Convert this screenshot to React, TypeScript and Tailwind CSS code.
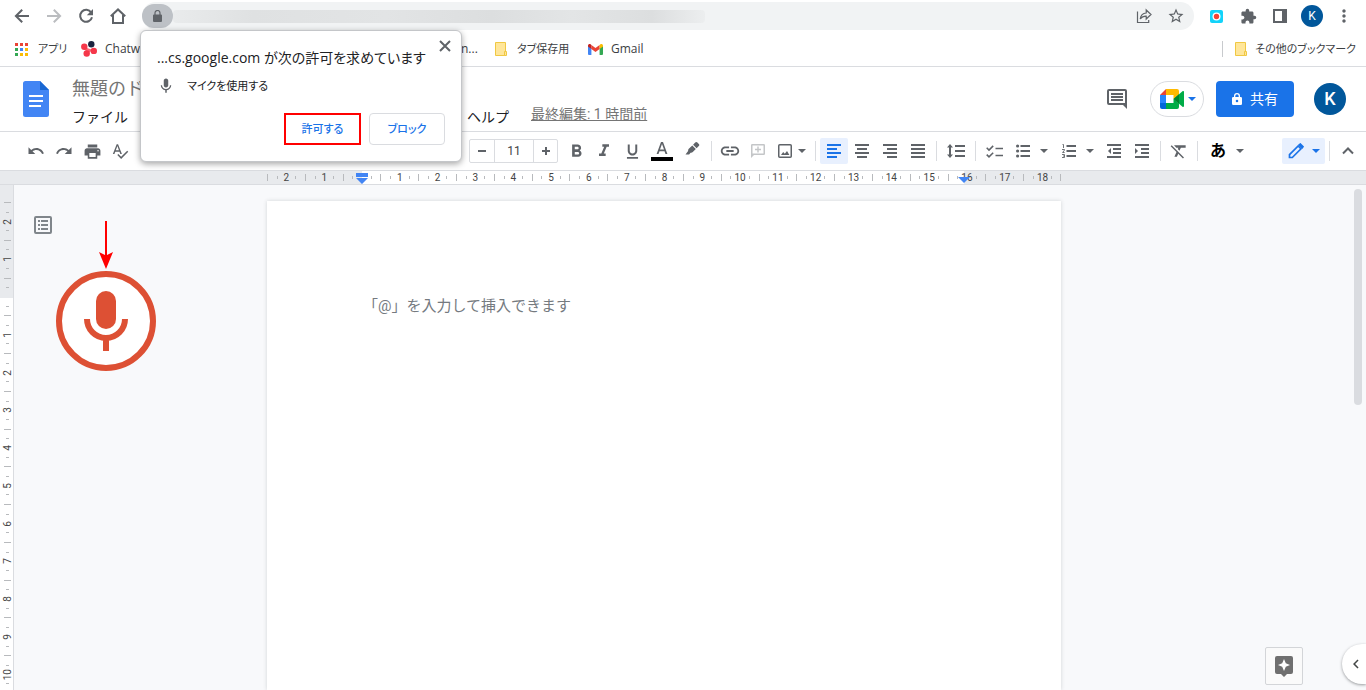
import type { ReactNode } from "react";
import {
  MdStarBorder,
  MdExtension,
  MdMoreVert,
  MdUndo,
  MdRedo,
  MdPrint,
  MdSpellcheck,
  MdFormatBold,
  MdFormatItalic,
  MdFormatUnderlined,
  MdInsertLink,
  MdFormatClear,
  MdKeyboardArrowLeft,
  MdMic,
} from "react-icons/md";

const Caret = () => (
  <svg viewBox="0 0 8 4" className="h-1 w-2 shrink-0" fill="currentColor">
    <path d="M0 0h8L4 4z" />
  </svg>
);

const Sep = () => <div className="mx-1 h-5 w-px shrink-0 bg-[#dadce0]" />;

function Tool({ label, children, className = "w-7" }: { label: string; children: ReactNode; className?: string }) {
  return (
    <button type="button" aria-label={label} className={`flex h-[26px] shrink-0 items-center justify-center ${className}`}>
      {children}
    </button>
  );
}

function StrokeIcon({ d }: { d: string }) {
  return (
    <svg viewBox="0 0 16 16" className="h-4 w-4 shrink-0" fill="none" stroke="currentColor" strokeWidth="2">
      <path d={d} />
    </svg>
  );
}

function AlignIcon({ rows }: { rows: [number, number][] }) {
  return (
    <svg viewBox="0 0 14 14" className="h-[14px] w-[14px]" fill="currentColor">
      {rows.map(([x, w], i) => (
        <rect key={i} x={x} y={i * 4} width={w} height="2" />
      ))}
    </svg>
  );
}

const LineSpacingIcon = () => (
  <svg viewBox="0 0 18 14" className="h-[14px] w-[18px]" fill="currentColor">
    <path d="M8 1h10v2H8zM8 6h10v2H8zM8 11h10v2H8z" />
    <path d="M3 0l3 3.500H4v7h2L3 14l-3-3.500h2v-7H0z" />
  </svg>
);

const ChecklistIcon = () => (
  <svg viewBox="0 0 17 13" className="h-[13px] w-[17px]" fill="none" stroke="currentColor">
    <path d="M9.500 3.500H17M9.500 10.500H17" strokeWidth="1.600" />
    <path d="M.7 2.800 3 5.100 7.200.9M.7 9.600 3 11.900l4.200-4.200" strokeWidth="1.500" />
  </svg>
);

const BulletsIcon = () => (
  <svg viewBox="0 0 14 14" className="mx-[2px] h-[14px] w-[14px] shrink-0" fill="currentColor">
    <path d="M4.500 1H14v2H4.500zM4.500 6H14v2H4.500zM4.500 11H14v2H4.500z" />
    <circle cx="1.600" cy="2" r="1.600" />
    <circle cx="1.600" cy="7" r="1.600" />
    <circle cx="1.600" cy="12" r="1.600" />
  </svg>
);

const NumbersIcon = () => (
  <svg viewBox="0 0 14 14" className="mx-[2px] h-[14px] w-[14px] shrink-0" fill="currentColor">
    <path d="M4.500 1H14v2H4.500zM4.500 6H14v2H4.500zM4.500 11H14v2H4.500z" />
    <path d="M.5.5h1V4M0 5.500h2.500v.6L.6 8.500h2M0 10.500h2.500v3H0M1 12h1.500" fill="none" stroke="currentColor" strokeWidth=".9" />
  </svg>
);

function IndentIcon({ arrow }: { arrow: string }) {
  return (
    <svg viewBox="0 0 14 14" className="h-[14px] w-[14px]" fill="currentColor">
      <path d="M0 0h14v2H0zM6 4h8v2H6zM6 8h8v2H6zM0 12h14v2H0z" />
      <path d={arrow} />
    </svg>
  );
}

const ReloadIcon = () => (
  <svg viewBox="0 0 16 16" className="h-4 w-4" fill="none" stroke="currentColor" strokeWidth="2">
    <path d="M13.200 4.500A6 6 0 1 0 14 9.200" />
    <path d="M15 1v6.200H8.800z" fill="currentColor" stroke="none" />
  </svg>
);

const AddCommentIcon = () => (
  <svg viewBox="0 0 14 14" className="h-[14px] w-[14px]" fill="currentColor">
    <path fillRule="evenodd" d="M1.200 0h11.600A1.200 1.200 0 0 1 14 1.200v8.600a1.200 1.200 0 0 1-1.200 1.200H3l-3 3V1.200A1.200 1.200 0 0 1 1.200 0zm.3 1.500v8h11v-8z" />
    <path d="M6.300 2.500h1.400v2.300H10v1.400H7.700v2.300H6.300V6.200H4V4.800h2.300z" />
  </svg>
);

const SiteLockIcon = () => (
  <svg viewBox="0 0 9 12" className="h-3 w-[9px]" fill="currentColor">
    <path d="M1 4.500h7a1 1 0 0 1 1 1V11a1 1 0 0 1-1 1H1a1 1 0 0 1-1-1V5.500a1 1 0 0 1 1-1z" />
    <path d="M2 5V3a2.500 2.500 0 0 1 5 0v2" fill="none" stroke="currentColor" strokeWidth="1.200" />
  </svg>
);

const ShareIcon = () => (
  <svg viewBox="0 0 16 16" className="h-4 w-4" fill="none" stroke="currentColor" strokeWidth="1.2">
    <path d="M1.500 3.500v11h11.2V12" />
    <path d="M4.200 11c.6-4 2.600-5.800 6-6V2l4.800 4.500-4.800 4.500V8.200C7.500 8.100 5.700 9 4.200 11z" />
  </svg>
);

const FolderIcon = () => (
  <svg viewBox="0 0 12 14" className="h-[14px] w-3" fill="#ffe69a" stroke="#f0c843">
    <path d="M.5.5h10v13H.5z" />
    <path d="M9.500 9.500h2v4h-2z" />
  </svg>
);

const AppsIcon = () => {
  const colors = ["#ea4335", "#ea4335", "#ea4335", "#34a853", "#4285f4", "#fbbc04", "#34a853", "#fbbc04", "#fbbc04"];
  return (
    <svg viewBox="0 0 13 13" className="h-[13px] w-[13px]">
      {colors.map((c, i) => (
        <rect key={i} x={(i % 3) * 5} y={Math.floor(i / 3) * 5} width="3" height="3" fill={c} />
      ))}
    </svg>
  );
};

const ChatworkIcon = () => (
  <svg viewBox="0 0 16 16" className="h-4 w-4">
    <g fill="#f5374a">
      <circle cx="3.300" cy="5.700" r="3.200" />
      <circle cx="12.800" cy="9.900" r="3.200" />
      <circle cx="5.700" cy="12.500" r="3.200" />
      <path d="m3 6 9 3-6 4z" opacity=".75" />
    </g>
    <circle cx="10.300" cy="3.300" r="3.200" fill="#1a2540" />
  </svg>
);

const GmailIcon = () => (
  <svg viewBox="0 0 15 11" className="h-[11px] w-[15px]">
    <path d="M0 1.500 3.400 4v7H1a1 1 0 0 1-1-1z" fill="#4285f4" />
    <path d="M15 1.500 11.600 4v7H14a1 1 0 0 0 1-1z" fill="#34a853" />
    <path d="M3.400 1 7.500 4.100 11.600 1v4L7.500 8 3.400 5z" fill="#ea4335" />
    <path d="M0 1.700C0 .2 1.700-.5 2.800.5l.6.5v4L0 2.600z" fill="#c5221f" />
    <path d="M15 1.700c0-1.500-1.700-2.200-2.800-1.200l-.6.5v4L15 2.600z" fill="#fbbc04" />
  </svg>
);

const DocsLogo = () => (
  <svg viewBox="0 0 26 36" className="h-9 w-[26px]">
    <path d="M2.500 0H17l9 9v24.500a2.500 2.500 0 0 1-2.500 2.500h-21A2.500 2.500 0 0 1 0 33.500v-31A2.500 2.500 0 0 1 2.500 0z" fill="#4285f4" />
    <path d="M17 0l9 9h-9z" fill="#1967d2" />
    <path d="M6 14h14v2H6zM6 19h14v2H6zM6 24h12v2H6z" fill="#fff" />
  </svg>
);

const MeetIcon = () => (
  <svg viewBox="0 0 24 20" className="h-5 w-6">
    <path d="M0 6h6v8H0z" fill="#2684fc" />
    <path d="M0 6 6 0v6z" fill="#ea4335" />
    <path d="M0 14h6v6H2a2 2 0 0 1-2-2z" fill="#0066da" />
    <path d="M6 0h11a2 2 0 0 1 2 2v4.500L13.500 10V6H6z" fill="#ffba00" />
    <path d="M6 14h7.500v-4l5.500 4.500V18a2 2 0 0 1-2 2H6z" fill="#00ac47" />
    <path d="M13.500 10 22.500 2.300c.6-.5 1.500-.1 1.500.7v14c0 .8-.9 1.200-1.500.7z" fill="#00ac47" />
    <path d="M13.500 10 19 5.300v9.400z" fill="#00832d" />
  </svg>
);

const CommentIcon = () => (
  <svg viewBox="0 0 20 20" className="h-5 w-5" fill="currentColor">
    <path fillRule="evenodd" d="M2 0h16a2 2 0 0 1 2 2v18l-4-4H2a2 2 0 0 1-2-2V2a2 2 0 0 1 2-2zm0 2v12h16V2z" />
    <path d="M4 4h12v2H4zM4 7h12v2H4zM4 10h12v2H4z" />
  </svg>
);

const ImageIcon = () => (
  <svg viewBox="0 0 14 14" className="h-[14px] w-[14px]" fill="none" stroke="currentColor">
    <rect x=".75" y=".75" width="12.500" height="12.500" rx="1" strokeWidth="1.500" />
    <path d="M3 11l2.200-3 1.600 1.800L9 7l2.400 4z" fill="currentColor" stroke="none" />
  </svg>
);

const HighlighterIcon = () => (
  <svg viewBox="0 0 15 14" className="h-[14px] w-[15px]" fill="currentColor">
    <path d="M10.200.6a1.600 1.600 0 0 1 2.200 0l1.400 1.300a1.600 1.600 0 0 1 0 2.200L11.600 6.300 8.100 2.800z" />
    <path d="M7.300 3.600l3.500 3.500-3 3c-.6.6-1.400.9-2.200.7L4.100 12.500H.5l2.600-3.600c-.1-.8.1-1.600.7-2.200z" />
  </svg>
);

const OutlineIcon = () => (
  <svg viewBox="0 0 18 18" className="h-[18px] w-[18px]" fill="#80868b">
    <path fillRule="evenodd" d="M2 0h14a2 2 0 0 1 2 2v14a2 2 0 0 1-2 2H2a2 2 0 0 1-2-2V2a2 2 0 0 1 2-2zm0 2v14h14V2z" />
    <path d="M4 4h2v2H4zM7 4h7v2H7zM4 8h2v2H4zM7 8h7v2H7zM4 12h2v2H4zM7 12h7v2H7z" />
  </svg>
);

const PencilIcon = () => (
  <svg viewBox="0 0 16 16" className="h-4 w-4" fill="none" stroke="currentColor" strokeWidth="1.700">
    <path d="M1.500 14.500v-2.800l8.700-8.700 2.800 2.800-8.700 8.700z" />
    <path d="M11.300 1.800l1-.8 2.700 2.700-.8 1z" fill="currentColor" />
  </svg>
);

const AssistIcon = () => (
  <svg viewBox="0 0 18 21" className="h-[21px] w-[18px]">
    <path d="M2 0h14a2 2 0 0 1 2 2v14a2 2 0 0 1-2 2h-4l-3 3-3-3H2a2 2 0 0 1-2-2V2a2 2 0 0 1 2-2z" fill="#6f6f6f" />
    <path d="M9 3l1.800 4.200L15 9l-4.200 1.800L9 15l-1.800-4.200L3 9l4.200-1.800z" fill="#fff" />
  </svg>
);

const VoiceMic = () => (
  <svg viewBox="0 0 44 60" className="h-[60px] w-11">
    <rect x="12" y="0" width="20" height="38" rx="10" fill="#dd5034" />
    <path d="M3 28a19 19 0 0 0 38 0M22 47v13" fill="none" stroke="#dd5034" strokeWidth="6" />
  </svg>
);

const horizontal = [2, 1, 0, ...Array.from({ length: 18 }, (_, i) => i + 1)];
const vertical = [2, 1, 0, ...Array.from({ length: 10 }, (_, i) => i + 1)];

function HorizontalRuler() {
  return (
    <div className="flex h-[15px] shrink-0 border-y border-[#dadce0] bg-[#e8eaed] text-[10px] leading-[13px] text-[#444]">
      <div className="w-[267px] shrink-0" />
      <div className="relative grid w-[794px] shrink-0 grid-cols-[repeat(21,minmax(0,1fr))] bg-[linear-gradient(to_right,#e8eaed_95px,#fff_95px,#fff_697px,#e8eaed_697px)]">
        {horizontal.map((n, i) => (
          <div key={i} className="flex items-center justify-between">
            <span className="h-[7px] w-px bg-[#b8babd]" />
            <span className="h-[3px] w-px bg-[#b8babd]" />
            <span className="flex w-0 justify-center">{n || ""}</span>
            <span className="h-[3px] w-px bg-[#b8babd]" />
            <span className="w-0" />
          </div>
        ))}
        <span className="absolute top-[3px] right-0 h-[7px] w-px bg-[#b8babd]" />
        <svg viewBox="0 0 12 12" className="absolute top-[2px] left-[89px] h-3 w-3" fill="#4285f4">
          <path d="M0 0h12v4H0zM0 5h12l-6 6z" />
        </svg>
        <svg viewBox="0 0 12 6" className="absolute top-[6px] left-[691px] h-[6px] w-3" fill="#4285f4">
          <path d="M0 0h12L6 6z" />
        </svg>
      </div>
    </div>
  );
}

function VerticalRuler() {
  return (
    <div className="w-[14px] shrink-0 border-r border-[#dadce0] bg-[linear-gradient(to_bottom,#e8eaed_113px,#fff_113px)] pt-[17px] text-[10px] leading-[15px] text-[#444]">
      <div className="grid h-[491px] grid-rows-[repeat(13,minmax(0,1fr))]">
        {vertical.map((n, i) => (
          <div key={i} className="flex flex-col items-center justify-between">
            <span className="h-px w-[7px] bg-[#b8babd]" />
            <span className="h-px w-[3px] bg-[#b8babd]" />
            <span className="flex h-0 items-center">
              <span className="rotate-180 [writing-mode:vertical-rl]">{n || ""}</span>
            </span>
            <span className="h-px w-[3px] bg-[#b8babd]" />
            <span className="h-0" />
          </div>
        ))}
      </div>
    </div>
  );
}

function BrowserBar() {
  const slot = "flex h-7 w-8 shrink-0 items-center justify-center";
  return (
    <div className="flex h-8 shrink-0 items-center px-[6px] text-[#5f6368]">
      <button type="button" aria-label="戻る" className={slot}><StrokeIcon d="M15 8H2.500M8.200 1.700 1.900 8l6.300 6.300" /></button>
      <button type="button" aria-label="進む" className={`${slot} text-[#bbbdc0]`}><StrokeIcon d="M1 8h12.500M7.800 1.700 14.100 8l-6.300 6.300" /></button>
      <button type="button" aria-label="再読み込み" className={slot}><ReloadIcon /></button>
      <button type="button" aria-label="ホーム" className={slot}><StrokeIcon d="M.8 8.200 8 1.400l7.200 6.800M3 7v8h10V7" /></button>
      <div className="ml-2 flex h-7 flex-1 items-center rounded-full bg-[#f1f3f4] pr-[2px]">
        <button type="button" aria-label="サイト情報" className="flex h-6 w-[31px] shrink-0 items-center justify-center rounded-full bg-[#bdc1c6]">
          <SiteLockIcon />
        </button>
        <div className="h-[13px] w-[532px] rounded-sm bg-[linear-gradient(to_right,#e9ebec,#dfe1e2_15%,#e2e4e5_40%,#dcdedf_60%,#e3e5e6_75%,#dcdedf_90%,#eceeef)]" />
        <div className="flex-1" />
        <button type="button" aria-label="共有" className={slot}><ShareIcon /></button>
        <button type="button" aria-label="ブックマークに追加" className={slot}><MdStarBorder size={18} /></button>
      </div>
      <div className="ml-[6px] flex">
        <button type="button" aria-label="画面録画" className={slot}>
          <svg viewBox="0 0 13 13" className="h-[13px] w-[13px]">
            <rect width="13" height="13" rx="2" fill="#12d3fa" />
            <circle cx="6.500" cy="6.500" r="4" fill="#fff" />
            <circle cx="6.500" cy="6.500" r="2.700" fill="#f44336" />
          </svg>
        </button>
        <button type="button" aria-label="拡張機能" className={slot}><MdExtension size={17} /></button>
        <button type="button" aria-label="サイドパネル" className={slot}>
          <svg viewBox="0 0 14 14" className="h-[14px] w-[14px]" fill="currentColor">
            <path fillRule="evenodd" d="M0 0h14v14H0zM2 2v10h7V2z" />
          </svg>
        </button>
        <button type="button" aria-label="アカウント" className={slot}>
          <span className="flex size-[22px] items-center justify-center rounded-full bg-[#01579b] text-xs text-white">K</span>
        </button>
        <button type="button" aria-label="メニュー" className={slot}><MdMoreVert size={20} /></button>
      </div>
    </div>
  );
}

function Bookmarks() {
  const link = "flex items-center whitespace-nowrap";
  return (
    <nav className="flex h-[35px] shrink-0 items-center border-b border-[#dadce0] pr-[10px] pl-[15px] font-['Open_Sans','Noto_Sans_CJK_JP',sans-serif] text-xs text-[#3c4043] [font-feature-settings:'palt']">
      <a href="#apps" className={`${link} w-[66px] gap-[10px] text-[11px]`}><AppsIcon />アプリ</a>
      <a href="#chatwork" className={`${link} w-[380px] gap-2`}><ChatworkIcon />Chatwork</a>
      <a href="#more" className={`${link} w-[34px]`}>n...</a>
      <a href="#tabs" className={`${link} w-[93px] gap-[10px] text-[11px]`}><FolderIcon />タブ保存用</a>
      <a href="#gmail" className={`${link} gap-2`}><GmailIcon />Gmail</a>
      <div className="flex-1" />
      <div className="mr-3 h-4 w-px bg-[#c8cacd]" />
      <a href="#others" className={`${link} gap-2 text-[11px]`}><FolderIcon />その他のブックマーク</a>
    </nav>
  );
}

function Header() {
  return (
    <header className="flex h-[65px] shrink-0 items-center border-b border-[#dadce0] pr-5 pl-[23px]">
      <a href="#home" aria-label="ドキュメント ホーム"><DocsLogo /></a>
      <div className="ml-[23px] flex flex-col pt-[7px] whitespace-nowrap">
        <h1 className="text-lg leading-7 text-[#757575]">無題のド</h1>
        <div className="flex items-start text-sm leading-7 text-[#202124]">
          <button type="button" className="w-[395px] text-left">ファイル</button>
          <button type="button">ヘルプ</button>
          <a href="#history" className="ml-[22px] leading-[22px] text-[#757575] underline">最終編集: 1 時間前</a>
        </div>
      </div>
      <div className="flex-1" />
      <button type="button" aria-label="コメント履歴" className="mr-[23px] text-[#5f6368]"><CommentIcon /></button>
      <button type="button" aria-label="ビデオ通話" className="mr-3 flex h-9 w-[54px] items-center justify-center gap-1 rounded-full border border-[#dadce0] pl-[2px] text-[#1a73e8]">
        <MeetIcon />
        <Caret />
      </button>
      <button type="button" className="mr-5 flex h-9 w-[78px] items-center justify-center gap-2 rounded bg-[#1a73e8] text-sm text-white">
        <svg viewBox="0 0 10 12" className="h-3 w-[10px]" fill="currentColor">
          <path fillRule="evenodd" d="M1.200 4H2V3a3 3 0 0 1 6 0v1h.8A1.200 1.200 0 0 1 10 5.200v5.600A1.200 1.200 0 0 1 8.800 12H1.200A1.200 1.200 0 0 1 0 10.800V5.200A1.200 1.200 0 0 1 1.200 4zm2.100 0h3.400V3a1.700 1.700 0 0 0-3.400 0zM5 6.700a1.300 1.300 0 1 0 0 2.600 1.300 1.300 0 0 0 0-2.600z" />
        </svg>
        共有
      </button>
      <button type="button" aria-label="Google アカウント" className="flex size-8 items-center justify-center rounded-full bg-[#01579b] text-lg font-medium text-white">K</button>
    </header>
  );
}

function Toolbar() {
  return (
    <div className="flex h-[38px] shrink-0 items-center pr-1 pl-[22px] text-[#5f6368]">
      <Tool label="元に戻す"><MdUndo size={18} /></Tool>
      <Tool label="やり直し"><MdRedo size={18} /></Tool>
      <Tool label="印刷"><MdPrint size={19} /></Tool>
      <Tool label="スペルチェック"><MdSpellcheck size={18} /></Tool>
      <div className="w-[335px] shrink-0" />
      <div className="flex h-6 w-[89px] shrink-0 items-stretch rounded-xs border border-[#dadce0]">
        <Tool label="縮小" className="h-full w-6"><StrokeIcon d="M4 8h8" /></Tool>
        <input aria-label="フォントサイズ" defaultValue="11" className="w-10 min-w-0 border-x border-[#dadce0] text-center text-xs text-[#444]" />
        <Tool label="拡大" className="h-full w-[23px]"><StrokeIcon d="M4 8h8M8 4v8" /></Tool>
      </div>
      <Tool label="太字" className="ml-1 w-7"><MdFormatBold size={21} /></Tool>
      <Tool label="斜体"><MdFormatItalic size={20} /></Tool>
      <Tool label="下線"><MdFormatUnderlined size={19} /></Tool>
      <Tool label="文字の色" className="w-8 flex-col">
        <svg viewBox="0 0 12 13" className="h-[13px] w-3" fill="currentColor">
          <path fillRule="evenodd" d="M5 0h2l4.400 12H9.500l-1-2.800h-5l-1 2.800H.6zM4 7.600h4L6 2.100z" />
        </svg>
        <span className="mt-[2px] h-1 w-[22px] bg-black" />
      </Tool>
      <Tool label="ハイライト" className="w-[29px] pb-1"><HighlighterIcon /></Tool>
      <Sep />
      <Tool label="リンクを挿入"><MdInsertLink size={22} /></Tool>
      <Tool label="コメントを追加" className="w-7 text-[#c4c6c8]"><AddCommentIcon /></Tool>
      <Tool label="画像を挿入" className="w-[39px] gap-[6px] text-[#5f6368]"><ImageIcon /><Caret /></Tool>
      <Sep />
      <Tool label="左揃え" className="w-7 rounded-xs bg-[#e8f0fe] text-[#1a73e8]"><AlignIcon rows={[[0, 14], [0, 10], [0, 14], [0, 10]]} /></Tool>
      <Tool label="中央揃え"><AlignIcon rows={[[0, 14], [2, 10], [0, 14], [2, 10]]} /></Tool>
      <Tool label="右揃え"><AlignIcon rows={[[0, 14], [4, 10], [0, 14], [4, 10]]} /></Tool>
      <Tool label="両端揃え"><AlignIcon rows={[[0, 14], [0, 14], [0, 14], [0, 14]]} /></Tool>
      <Sep />
      <Tool label="行間隔" className="w-[30px]"><LineSpacingIcon /></Tool>
      <Sep />
      <Tool label="チェックリスト"><ChecklistIcon /></Tool>
      <Tool label="箇条書き" className="w-[46px] gap-2"><BulletsIcon /><Caret /></Tool>
      <Tool label="番号付きリスト" className="w-[46px] gap-2"><NumbersIcon /><Caret /></Tool>
      <Tool label="インデント減"><IndentIcon arrow="M4 4v6L1 7z" /></Tool>
      <Tool label="インデント増"><IndentIcon arrow="M0 4v6l3-3z" /></Tool>
      <Sep />
      <Tool label="書式をクリア"><MdFormatClear size={20} /></Tool>
      <Sep />
      <Tool label="入力ツール" className="w-[50px] gap-[10px]">
        <span className="text-base leading-6 font-bold text-black">あ</span>
        <Caret />
      </Tool>
      <div className="flex-1" />
      <Tool label="編集モード" className="w-[43px] gap-2 rounded-xs bg-[#e8f0fe] text-[#1a73e8]"><PencilIcon /><Caret /></Tool>
      <Sep />
      <Tool label="メニューを非表示"><StrokeIcon d="M3 10.500 8 5.500l5 5" /></Tool>
    </div>
  );
}

function PermissionDialog() {
  return (
    <section
      role="dialog"
      aria-labelledby="permission-title"
      className="absolute top-[30px] left-[140px] w-[322px] rounded-md border border-[#c4c6c9] bg-white p-4 pt-[7px] font-['Open_Sans','Noto_Sans_CJK_JP',sans-serif] text-[#202124] shadow-[0_2px_6px_rgba(0,0,0,0.35)] [font-feature-settings:'palt']"
    >
      <div className="-mr-2 flex justify-end text-[#5f6368]">
        <button type="button" aria-label="閉じる"><StrokeIcon d="M3 3l10 10M13 3 3 13" /></button>
      </div>
      <h2 id="permission-title" className="-mt-2 text-sm leading-6 whitespace-nowrap">...cs.google.com が次の許可を求めています</h2>
      <p className="mt-1 flex items-center gap-3 text-[11px] leading-6">
        <MdMic size={18} className="text-[#5f6368]" />
        マイクを使用する
      </p>
      <div className="mt-[15px] flex justify-end gap-2 text-[11px] font-medium text-[#1a73e8]">
        <button type="button" className="h-8 w-[77px] border-2 border-[#f00]">許可する</button>
        <button type="button" className="h-8 w-[76px] rounded border border-[#dadce0]">ブロック</button>
      </div>
    </section>
  );
}

export default function App() {
  return (
    <div className="relative flex h-screen flex-col overflow-hidden bg-white font-[Roboto,'Noto_Sans_CJK_JP',sans-serif]">
      <BrowserBar />
      <Bookmarks />
      <Header />
      <Toolbar />
      <HorizontalRuler />
      <main className="relative flex min-h-0 flex-1 overflow-hidden bg-[#f8f9fb]">
        <VerticalRuler />
        <aside className="w-[253px] shrink-0 pt-[31px] pl-5">
          <button type="button" aria-label="ドキュメントの概要を表示" className="block"><OutlineIcon /></button>
          <div className="ml-[22px] flex w-[100px] flex-col items-center">
            <svg viewBox="0 0 14 50" className="-mt-[13px] h-[50px] w-[14px]" fill="#f00">
              <path d="M6 0h2v34l6-3-7 17L0 31l6 3z" />
            </svg>
            <button type="button" aria-label="音声入力" className="flex size-[100px] items-center justify-center rounded-full border-6 border-[#dd5034] bg-white">
              <VoiceMic />
            </button>
          </div>
        </aside>
        <article className="mt-4 w-[794px] shrink-0 bg-white px-[96px] pt-[93px] shadow-[0_0_4px_rgba(60,64,67,0.2)]">
          <p className="text-[15px] leading-6 text-[#757a7f]">「@」を入力して挿入できます</p>
        </article>
        <div className="flex-1" />
        <div className="w-3 shrink-0 pt-1 pr-1">
          <div className="h-[216px] rounded-full bg-[#dadce0]" />
        </div>
        <button type="button" aria-label="データ探索" className="absolute right-[63px] bottom-[5px] flex size-[38px] items-center justify-center rounded-xs border border-[#d3d5d8] bg-[#fafafa]">
          <AssistIcon />
        </button>
        <button type="button" aria-label="サイドパネルを表示" className="absolute right-0 bottom-[6px] flex h-10 w-6 items-center justify-center rounded-l-full bg-white pl-1 text-[#444746] shadow-[0_1px_3px_rgba(60,64,67,0.5)]">
          <MdKeyboardArrowLeft size={18} />
        </button>
      </main>
      <PermissionDialog />
    </div>
  );
}
